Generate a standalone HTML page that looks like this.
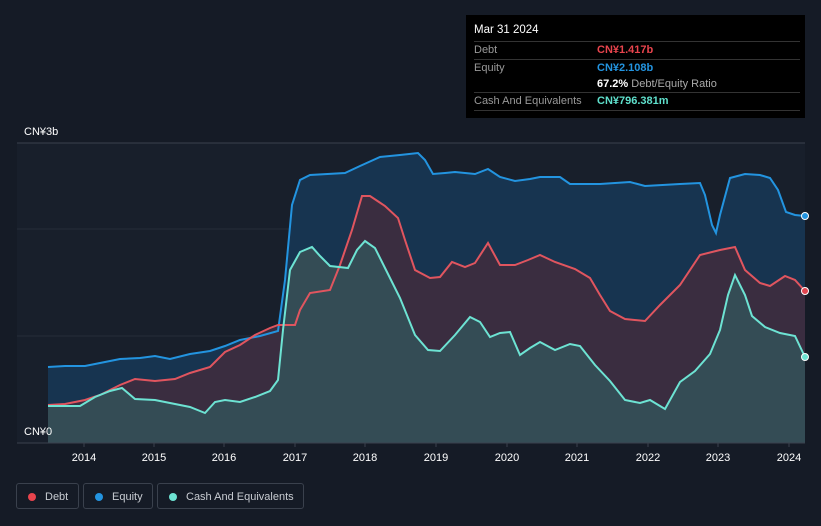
<!DOCTYPE html>
<html><head><meta charset="utf-8"><style>
html,body{margin:0;padding:0;background:#151b26;width:821px;height:526px;overflow:hidden;font-family:"Liberation Sans",sans-serif}
.tt{position:absolute;left:466px;top:15px;width:339px;height:103px;background:#000;color:#fff;font-size:11px}
.tt .r{position:absolute;left:8px;width:326px;border-top:1px solid #333;height:17px;line-height:17px}
.lg{position:absolute;top:483px;height:26px;border:1px solid #3a414d;border-radius:3px;color:#c8ccd2;font-size:11px;line-height:26px;box-sizing:border-box;white-space:nowrap}
.lg i{position:absolute;left:11px;top:9px;width:8px;height:8px;border-radius:50%}
</style></head><body>
<svg width="821" height="526" style="position:absolute;left:0;top:0" font-family="Liberation Sans, sans-serif">
<rect x="17" y="143" width="788" height="300" fill="#181f2b"/>
<line x1="17" y1="143" x2="805" y2="143" stroke="#3a414d"/>
<line x1="17" y1="229" x2="805" y2="229" stroke="#262d38"/>
<line x1="17" y1="336" x2="805" y2="336" stroke="#262d38"/>
<path d="M48,367 L65,366 85,366 100,363 120,359 140,358 155,356 170,359 190,354 210,351 225,346 240,340 260,336 278,331 285,280 292,205 300,180 310,175 345,173 360,166 380,157 400,155 418,153 425,160 433,174 445,173 455,172 475,174 488,169 500,177 515,181 530,179 540,177 560,177 570,184 600,184 630,182 645,186 680,184 700,183 705,195 712,225 716,233 720,215 730,178 745,174 760,175 770,178 778,190 786,212 795,215 805,216 L805,443 L48,443Z" fill="#173450"/>
<path d="M48,405 L65,404 85,400 100,395 120,385 135,379 155,381 175,379 190,373 210,367 225,352 240,345 255,335 270,328 278,325 295,325 300,310 310,293 330,290 340,265 352,230 362,196 370,196 385,206 398,218 405,240 415,270 430,278 440,277 452,262 465,267 475,263 488,243 500,265 515,265 528,260 540,255 555,262 575,269 590,278 600,295 610,311 625,319 645,321 660,305 680,285 700,255 720,250 735,247 745,270 760,283 770,286 785,276 795,280 805,291 L805,443 L48,443Z" fill="#3a2d40"/>
<path d="M48,406 L80,406 95,397 110,391 122,388 135,399 155,400 170,403 190,407 205,413 215,402 225,400 240,402 255,397 270,391 278,380 283,330 290,270 300,252 312,247 320,256 330,266 348,268 357,250 365,241 375,248 385,268 400,298 415,335 428,350 440,351 455,335 470,317 480,322 490,337 500,333 510,332 520,355 530,348 540,342 555,350 570,344 580,346 595,365 610,381 625,400 640,403 650,400 665,409 680,382 695,371 710,354 720,330 728,295 735,275 745,295 752,316 765,327 780,333 795,336 805,357 L805,443 L48,443Z" fill="#344c55"/>
<polyline fill="none" stroke="#2394e0" stroke-width="2" points="48,367 65,366 85,366 100,363 120,359 140,358 155,356 170,359 190,354 210,351 225,346 240,340 260,336 278,331 285,280 292,205 300,180 310,175 345,173 360,166 380,157 400,155 418,153 425,160 433,174 445,173 455,172 475,174 488,169 500,177 515,181 530,179 540,177 560,177 570,184 600,184 630,182 645,186 680,184 700,183 705,195 712,225 716,233 720,215 730,178 745,174 760,175 770,178 778,190 786,212 795,215 805,216"/>
<polyline fill="none" stroke="#e0555f" stroke-width="2" points="48,405 65,404 85,400 100,395 120,385 135,379 155,381 175,379 190,373 210,367 225,352 240,345 255,335 270,328 278,325 295,325 300,310 310,293 330,290 340,265 352,230 362,196 370,196 385,206 398,218 405,240 415,270 430,278 440,277 452,262 465,267 475,263 488,243 500,265 515,265 528,260 540,255 555,262 575,269 590,278 600,295 610,311 625,319 645,321 660,305 680,285 700,255 720,250 735,247 745,270 760,283 770,286 785,276 795,280 805,291"/>
<polyline fill="none" stroke="#6de3d3" stroke-width="2" points="48,406 80,406 95,397 110,391 122,388 135,399 155,400 170,403 190,407 205,413 215,402 225,400 240,402 255,397 270,391 278,380 283,330 290,270 300,252 312,247 320,256 330,266 348,268 357,250 365,241 375,248 385,268 400,298 415,335 428,350 440,351 455,335 470,317 480,322 490,337 500,333 510,332 520,355 530,348 540,342 555,350 570,344 580,346 595,365 610,381 625,400 640,403 650,400 665,409 680,382 695,371 710,354 720,330 728,295 735,275 745,295 752,316 765,327 780,333 795,336 805,357"/>
<circle cx="805" cy="216" r="3.5" fill="#2394e0" stroke="#fff" stroke-width="1"/>
<circle cx="805" cy="291" r="3.5" fill="#e04550" stroke="#fff" stroke-width="1"/>
<circle cx="805" cy="357" r="3.5" fill="#6de3d3" stroke="#fff" stroke-width="1"/>
<line x1="17" y1="443" x2="805" y2="443" stroke="#3a414d"/>
<g fill="#fff" font-size="11" text-anchor="middle">
<text x="84" y="461">2014</text><text x="154" y="461">2015</text><text x="224" y="461">2016</text><text x="295" y="461">2017</text><text x="365" y="461">2018</text><text x="436" y="461">2019</text><text x="507" y="461">2020</text><text x="577" y="461">2021</text><text x="648" y="461">2022</text><text x="718" y="461">2023</text><text x="789" y="461">2024</text>
</g>
<g stroke="#3a414d"><line x1="84" y1="443" x2="84" y2="447"/><line x1="154" y1="443" x2="154" y2="447"/><line x1="224" y1="443" x2="224" y2="447"/><line x1="295" y1="443" x2="295" y2="447"/><line x1="365" y1="443" x2="365" y2="447"/><line x1="436" y1="443" x2="436" y2="447"/><line x1="507" y1="443" x2="507" y2="447"/><line x1="577" y1="443" x2="577" y2="447"/><line x1="648" y1="443" x2="648" y2="447"/><line x1="718" y1="443" x2="718" y2="447"/><line x1="789" y1="443" x2="789" y2="447"/></g>
<text x="24" y="135" fill="#fff" font-size="11">CN¥3b</text>
<text x="24" y="435" fill="#fff" font-size="11">CN¥0</text>
</svg>
<div class="tt">
<div style="position:absolute;left:8px;top:9px;font-size:11.5px">Mar 31 2024</div>
<div class="r" style="top:26px"><span style="color:#999">Debt</span><span style="position:absolute;left:123px;color:#e8444d;font-weight:bold">CN¥1.417b</span></div>
<div class="r" style="top:44px"><span style="color:#999">Equity</span><span style="position:absolute;left:123px;color:#2394e0;font-weight:bold">CN¥2.108b</span></div>
<div class="r" style="top:61px;border-top:none"><span style="position:absolute;left:123px"><b>67.2%</b> <span style="color:#aaa">Debt/Equity Ratio</span></span></div>
<div class="r" style="top:77px;border-bottom:1px solid #333"><span style="color:#999">Cash And Equivalents</span><span style="position:absolute;left:123px;color:#5fe0cc;font-weight:bold">CN¥796.381m</span></div>
</div>
<div class="lg" style="left:16px;width:63px"><i style="background:#e8444d"></i><span style="position:absolute;left:28px">Debt</span></div>
<div class="lg" style="left:83px;width:70px"><i style="background:#2394e0"></i><span style="position:absolute;left:28px">Equity</span></div>
<div class="lg" style="left:157px;width:147px"><i style="background:#6de3d3"></i><span style="position:absolute;left:28px">Cash And Equivalents</span></div>
</body></html>
